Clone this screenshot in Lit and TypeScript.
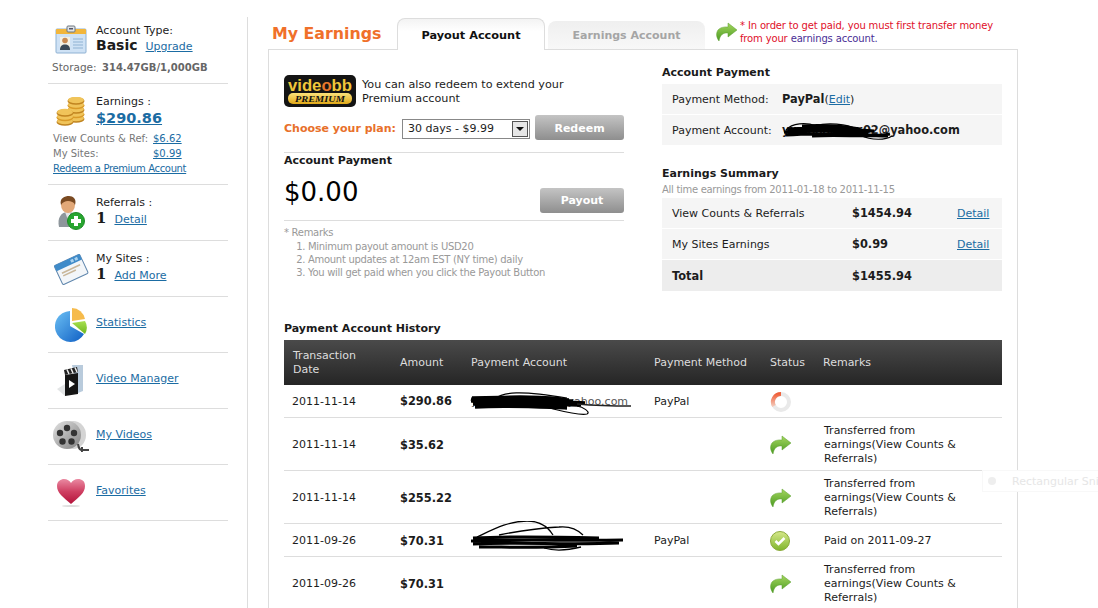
import { LitElement, css, html, svg } from 'lit'
import { customElement } from 'lit/decorators.js'

const arrowIcon = (w = 22, h = 20) => html`
  <svg width=${w} height=${h} viewBox="0 0 22 20">
    <defs>
      <linearGradient id="ag" x1="0" y1="0" x2="0" y2="1">
        <stop offset="0" stop-color="#a4d65e" /><stop offset="1" stop-color="#4a9a22" />
      </linearGradient>
    </defs>
    <path d="M12 1 L21 8 L12 15 L12 11 C7 10.500 4 13 3 19 C0 15 0 11 2 8 C4 5.500 8 4.600 12 5 Z" fill="url(#ag)" stroke="#5a9e2c" stroke-width=".5" />
  </svg>
`

const cardIcon = html`
  <svg width="32" height="30" viewBox="0 0 32 30">
    <rect x="1" y="4" width="30" height="24" rx="1" fill="#cfe2f5" stroke="#8fb2d3" />
    <path d="M1 5 a1 1 0 0 1 1-1 h28 a1 1 0 0 1 1 1 v4 H1Z" fill="#f2b63c" />
    <rect x="12" y="1" width="8" height="6" rx="1" fill="#dfe3e6" stroke="#6d7780" />
    <rect x="14" y="3" width="4" height="1.500" fill="#556" />
    <rect x="5" y="12" width="10" height="13" fill="#f6f1e4" />
    <circle cx="10" cy="15.500" r="2.800" fill="#c98a52" />
    <path d="M5 25 c0-4 2-5.500 5-5.500 s5 1.500 5 5.500Z" fill="#3c4a58" />
    <path d="M18 14h10M18 17h10M18 20h10M18 23h10" stroke="#8fb2d3" />
  </svg>
`

const coinStack = (x: number, base: number, n: number) => {
  const out = []
  for (let i = 0; i < n; i++) {
    const y = base - i * 4.500
    out.push(svg`<ellipse cx=${x} cy=${y} rx="8.500" ry="3.800" fill=${i % 2 ? '#d99a28' : '#c08420'} />
      <ellipse cx=${x} cy=${y - 1} rx="8" ry="3.200" fill="#f0c45a" />`)
  }
  return out
}

const coinsIcon = html`
  <svg width="32" height="30" viewBox="0 0 32 30">
    ${coinStack(21, 22, 5)}
    ${coinStack(10, 25, 3)}
  </svg>
`

const referralIcon = html`
  <svg width="30" height="34" viewBox="0 0 30 34">
    <path d="M3 31 c-2-9 2-15 9-15 s11 5 10 15Z" fill="#8e969c" />
    <path d="M9 16 l3 8 l3-8Z" fill="#e4e6e8" />
    <ellipse cx="12" cy="9" rx="7" ry="8" fill="#e2a878" />
    <path d="M5 9 C3 2 9 0 13 0 s8 3 6 9 C18 6 15 5 12 5 S7 6 5 9Z" fill="#7a4a22" />
    <circle cx="20" cy="25" r="8.500" fill="#27a52f" stroke="#1d8c26" />
    <path d="M18 20h4v3h3v4h-3v3h-4v-3h-3v-4h3Z" fill="#fff" />
  </svg>
`

const siteIcon = html`
  <svg width="36" height="34" viewBox="0 0 36 34">
    <g transform="rotate(-25 18 17)">
      <rect x="4" y="7" width="28" height="21" rx="1.500" fill="#f3f6f9" stroke="#5f86ad" />
      <rect x="4" y="7" width="28" height="6" fill="#3f8bc9" />
      <rect x="21" y="8.500" width="3" height="3" fill="#a9d2ef" />
      <rect x="25.500" y="8.500" width="3" height="3" fill="#a9d2ef" />
      <path d="M8 17h20M8 20h14" stroke="#c9b79a" stroke-width="1.500" />
    </g>
  </svg>
`

const pieIcon = html`
  <svg width="32" height="34" viewBox="0 0 32 34">
    <defs>
      <linearGradient id="pb" x1="0" y1="0" x2="1" y2="1">
        <stop offset="0" stop-color="#6cc0f4" /><stop offset="1" stop-color="#0f5fc4" />
      </linearGradient>
      <linearGradient id="pg" x1="0" y1="0" x2="0" y2="1">
        <stop offset="0" stop-color="#a8e050" /><stop offset="1" stop-color="#6fb71e" />
      </linearGradient>
    </defs>
    <path d="M15 3 A15.500 15.500 0 1 0 29 26 L15 18Z" fill="url(#pb)" />
    <path d="M17 15 L30 13 A13 13 0 0 1 30 26Z" fill="url(#pg)" />
    <path d="M17 0 A13.500 13.500 0 0 1 30 11 L17 13Z" fill="#f6bb4c" />
  </svg>
`

const clapIcon = html`
  <svg width="30" height="34" viewBox="0 0 30 34">
    <path d="M16 1 h11 v26 l-5 2Z" fill="#b9cbdc" />
    <path d="M1 25 l8-5 v12 Z" fill="#e3e5e6" />
    <path d="M9 11 l13-2 v21 l-13 2Z" fill="#151515" />
    <path d="M8 6 l13-3 l1 5 l-13 3Z" fill="#222" />
    <path d="M11 5.500 l2 4.500 M15 4.500 l2 4.500 M19 3.500 l2 4.500" stroke="#eee" stroke-width="1.500" />
    <path d="M13 16 l6 4 l-6 4Z" fill="#fff" />
  </svg>
`

const reelIcon = html`
  <svg width="38" height="34" viewBox="0 0 38 34">
    <defs>
      <linearGradient id="rg" x1="0" y1="0" x2="1" y2="1">
        <stop offset="0" stop-color="#e2e2e2" /><stop offset="1" stop-color="#808080" />
      </linearGradient>
    </defs>
    <ellipse cx="21" cy="15" rx="13" ry="14" fill="#d4d4d4" />
    <ellipse cx="15" cy="15" rx="14" ry="14" fill="url(#rg)" />
    <circle cx="15" cy="8" r="3.200" fill="#333" />
    <circle cx="8" cy="13" r="3.200" fill="#333" />
    <circle cx="22" cy="13" r="3.200" fill="#333" />
    <circle cx="10.500" cy="21.500" r="3.200" fill="#333" />
    <circle cx="19.500" cy="21.500" r="3.200" fill="#333" />
    <path d="M26 24 q1 7 5 6 l6 0 M30 27 l0 5" stroke="#444" stroke-width="2" fill="none" />
  </svg>
`

const heartIcon = html`
  <svg width="32" height="32" viewBox="0 0 32 32">
    <defs>
      <linearGradient id="hg" x1="0" y1="0" x2="0" y2="1">
        <stop offset="0" stop-color="#ea8aa2" /><stop offset=".5" stop-color="#cf3f62" /><stop offset="1" stop-color="#b3123a" />
      </linearGradient>
    </defs>
    <path d="M16 27 C8 20 2 16 2 9 C2 4 6 2 9 2 C12 2 15 4 16 6 C17 4 20 2 23 2 C27 2 30 4 30 9 C30 16 24 20 16 27Z" fill="url(#hg)" />
    <ellipse cx="16" cy="29" rx="9" ry="1" fill="#ddd" />
  </svg>
`

const spinnerIcon = html`
  <svg width="22" height="22" viewBox="0 0 22 22">
    <defs>
      <linearGradient id="sg" x1="0" y1="0" x2="0" y2="1">
        <stop offset="0" stop-color="#f0603a" /><stop offset="1" stop-color="#f3c8b8" />
      </linearGradient>
    </defs>
    <circle cx="11" cy="11" r="8" fill="none" stroke="#e9e9e9" stroke-width="4" />
    <path d="M11 3 A8 8 0 0 0 4 15" fill="none" stroke="url(#sg)" stroke-width="4" />
  </svg>
`

const checkIcon = html`
  <svg width="20" height="20" viewBox="0 0 20 20">
    <defs>
      <linearGradient id="cg" x1="0" y1="0" x2="0" y2="1">
        <stop offset="0" stop-color="#d6e88a" /><stop offset="1" stop-color="#7fb52c" />
      </linearGradient>
    </defs>
    <circle cx="10" cy="10" r="9.500" fill="url(#cg)" stroke="#8cab3c" />
    <path d="M5.500 10 l3 3 l6-6" fill="none" stroke="#fff" stroke-width="2.500" />
  </svg>
`

// pen scribbles the owner drew over the e-mail addresses
const scribbleOne = html`
  <svg class="scribble s1" width="164" height="26" viewBox="0 0 164 26">
    <path d="M3 8 C30 7 70 8 100 10 M2 11 C40 9 80 11 116 13 M4 14 C40 12 80 14 112 15 M6 17 C40 15 70 17 98 18 M26 8 C50 6 70 7 92 9 M2 9 C30 16 70 9 104 11" stroke="#000" stroke-width="3.400" fill="none" />
    <path d="M25 9 C35 2 50 0 98 8 M72 16 C90 20 108 26 118 24 C122 22 114 17 108 16" stroke="#000" stroke-width="1.200" fill="none" />
    <path d="M108 14 C120 15 140 16 162 16" stroke="#222" stroke-width="1.600" fill="none" />
  </svg>
`

const scribbleTwo = html`
  <svg class="scribble s2" width="156" height="32" viewBox="0 0 156 32">
    <path d="M4 17 C40 15 90 16 130 17 M2 20 C50 18 100 20 154 19 M4 23 C50 21 100 24 150 22 M10 26 C40 26 70 27 108 25" stroke="#000" stroke-width="3" fill="none" />
    <path d="M8 16 C25 8 40 0 58 0 C70 0 78 4 84 14 M30 14 C50 10 70 7 90 6 C100 5 108 8 114 14 M75 27 C85 30 100 29 112 26" stroke="#000" stroke-width="1.300" fill="none" />
  </svg>
`

const scribbleTop = html`
  <svg class="scribble" width="112" height="20" viewBox="0 0 112 20">
    <path d="M2 11 C30 9 60 9 86 12 M4 14 C40 11 70 14 106 15 M6 8 C40 6 70 9 92 10 M20 5 C40 4 60 5 78 8 M30 15 C60 13 90 17 108 13" stroke="#000" stroke-width="3.200" fill="none" />
    <path d="M4 9 C10 2 24 1 34 5 C44 1 66 3 74 8 M78 14 C90 20 104 19 110 15" stroke="#000" stroke-width="1.200" fill="none" />
  </svg>
`

const transferred = html`Transferred from<br />earnings(View Counts &amp;<br />Referrals)`

@customElement('app-root')
export class AppRoot extends LitElement {

  private history = [
    { date: '2011-11-14', amount: '$290.86', account: scribbleOne, mail: 'yxxxxxxxxxx02@yahoo.com', method: 'PayPal', status: spinnerIcon, remarks: null },
    { date: '2011-11-14', amount: '$35.62', status: arrowIcon(), remarks: transferred },
    { date: '2011-11-14', amount: '$255.22', status: arrowIcon(), remarks: transferred },
    { date: '2011-09-26', amount: '$70.31', account: scribbleTwo, method: 'PayPal', status: checkIcon, remarks: 'Paid on 2011-09-27' },
    { date: '2011-09-26', amount: '$70.31', status: arrowIcon(), remarks: transferred },
  ]

  private navLinks = [
    { icon: pieIcon, label: 'Statistics' },
    { icon: clapIcon, label: 'Video Manager' },
    { icon: reelIcon, label: 'My Videos' },
    { icon: heartIcon, label: 'Favorites' },
  ]

  private renderSidebar() {
    return html`
      <aside class="sidebar">
        <div class="side-row account">
          <div class="side-head">
            <div class="side-icon">${cardIcon}</div>
            <div>
              <div>Account Type:</div>
              <div class="count-line"><b class="basic">Basic</b><a href="#">Upgrade</a></div>
            </div>
          </div>
          <div class="storage">Storage: <b>314.47GB/1,000GB</b></div>
        </div>
        <div class="side-row earnings">
          <div class="side-head">
            <div class="side-icon">${coinsIcon}</div>
            <div>
              <div>Earnings :</div>
              <a class="big-money" href="#">$290.86</a>
            </div>
          </div>
          <div class="small-lines">
            <div class="split"><span>View Counts &amp; Ref:</span><a href="#">$6.62</a></div>
            <div class="split"><span>My Sites:</span><a href="#">$0.99</a></div>
            <a class="redeem-link" href="#">Redeem a Premium Account</a>
          </div>
        </div>
        <div class="side-row plain">
          <div class="side-icon">${referralIcon}</div>
          <div>
            <div>Referrals :</div>
            <div class="count-line tall"><b class="count">1</b><a href="#">Detail</a></div>
          </div>
        </div>
        <div class="side-row plain">
          <div class="side-icon">${siteIcon}</div>
          <div>
            <div>My Sites :</div>
            <div class="count-line tall"><b class="count">1</b><a href="#">Add More</a></div>
          </div>
        </div>
        ${this.navLinks.map(link => html`
          <div class="side-row plain">
            <div class="side-icon">${link.icon}</div>
            <a class="nav-link" href="#">${link.label}</a>
          </div>
        `)}
      </aside>
    `
  }

  private renderLeftColumn() {
    return html`
      <div class="left-col">
        <div class="promo">
          <svg class="logo" width="72" height="32" viewBox="0 0 72 32">
            <defs>
              <linearGradient id="lp" x1="0" y1="0" x2="0" y2="1">
                <stop offset="0" stop-color="#fbe27a" /><stop offset="1" stop-color="#e0a818" />
              </linearGradient>
            </defs>
            <rect width="72" height="32" rx="5" fill="#141414" />
            <text x="4" y="16" textLength="64" lengthAdjust="spacingAndGlyphs" font-family="Liberation Sans" font-weight="700" font-size="17" fill="#f0c63a">vide<tspan fill="#e8762a">o</tspan>bb</text>
            <rect x="4" y="18" width="64" height="11" rx="5" fill="url(#lp)" />
            <text x="11" y="27" textLength="50" lengthAdjust="spacingAndGlyphs" font-family="Liberation Serif" font-style="italic" font-weight="700" font-size="9" fill="#111">PREMIUM</text>
          </svg>
          <span class="promo-text">You can also redeem to extend your<br />Premium account</span>
        </div>
        <div class="plan">
          <span class="plan-label">Choose your plan:</span>
          <div class="select">30 days - $9.99<span class="select-btn"></span></div>
          <button class="btn redeem">Redeem</button>
        </div>
        <div class="payment">
          <div class="heading">Account Payment</div>
          <div class="payout-row">
            <div class="balance">$0.00</div>
            <button class="btn payout">Payout</button>
          </div>
        </div>
        <div class="remarks">
          <div>* Remarks</div>
          <ol>
            <li>Minimum payout amount is USD20</li>
            <li>Amount updates at 12am EST (NY time) daily</li>
            <li>You will get paid when you click the Payout Button</li>
          </ol>
        </div>
      </div>
    `
  }

  private renderRightColumn() {
    return html`
      <div class="right-col">
        <div class="heading">Account Payment</div>
        <div class="info-rows">
          <div class="info-row"><span class="info-label">Payment Method:</span><span><b>PayPal</b>(<a href="#">Edit</a>)</span></div>
          <div class="info-row">
            <span class="info-label">Payment Account:</span>
            <span class="covered"><b class="mail">yxxxxxxxxxx02@yahoo.com</b>${scribbleTop}</span>
          </div>
        </div>
        <div class="heading summary-head">Earnings Summary</div>
        <div class="sub">All time earnings from 2011-01-18 to 2011-11-15</div>
        <div class="info-rows summary-rows">
          <div class="sum-row"><span>View Counts &amp; Referrals</span><b>$1454.94</b><a href="#">Detail</a></div>
          <div class="sum-row"><span>My Sites Earnings</span><b>$0.99</b><a href="#">Detail</a></div>
          <div class="sum-row total"><b>Total</b><b>$1455.94</b><span></span></div>
        </div>
      </div>
    `
  }

  private renderHistory() {
    return html`
      <div class="heading history-head">Payment Account History</div>
      <table>
        <colgroup>
          <col class="c1" /><col class="c2" /><col class="c3" />
          <col class="c4" /><col class="c5" /><col class="c6" />
        </colgroup>
        <thead>
          <tr>
            <th>Transaction<br />Date</th><th>Amount</th><th>Payment Account</th>
            <th>Payment Method</th><th>Status</th><th>Remarks</th>
          </tr>
        </thead>
        <tbody>
          ${this.history.map(row => html`
            <tr>
              <td>${row.date}</td>
              <td><b>${row.amount}</b></td>
              <td class="account-cell">${row.mail ?? ''}${row.account ?? ''}</td>
              <td>${row.method ?? ''}</td>
              <td class="status-cell">${row.status}</td>
              <td class="remarks-cell">${row.remarks ?? ''}</td>
            </tr>
          `)}
        </tbody>
      </table>
    `
  }

  render() {
    return html`
      <div class="page">
        ${this.renderSidebar()}
        <main class="main">
          <div class="top">
            <h1>My Earnings</h1>
            <div class="tab active">Payout Account</div>
            <div class="tab">Earnings Account</div>
            <div class="notice">
              ${arrowIcon(22, 20)}
              <p>* In order to get paid, you must first transfer money<br />from your <span class="purple">earnings account.</span></p>
            </div>
          </div>
          <section class="panel">
            <div class="columns">
              ${this.renderLeftColumn()}
              ${this.renderRightColumn()}
            </div>
            ${this.renderHistory()}
          </section>
        </main>
      </div>
      <div class="snip"><span class="snip-dot"></span>Rectangular Snip</div>
    `
  }

  static styles = css`
    :host {
      display: block;
      position: relative;
      width: 1098px;
      height: 608px;
      overflow: hidden;
      background: #fff;
      color: #1c1c1c;
      font-family: "DejaVu Sans", sans-serif;
      font-size: 11px;
    }
    a { color: #1b6ca3; }
    b { font-weight: 700; }

    .page {
      display: flex;
      height: 608px;
      padding: 17px 0 0 48px;
      box-sizing: border-box;
    }

    /* sidebar */
    .sidebar { width: 180px; flex: none; margin-right: 19px; }
    .side-row { border-bottom: 1px solid #ddd; box-sizing: border-box; }
    .side-head, .plain { display: flex; align-items: center; }
    .side-icon { width: 48px; flex: none; display: flex; justify-content: center; padding-right: 3px; box-sizing: border-box; }
    .account { height: 67px; padding-top: 7px; }
    .earnings { height: 101px; padding-top: 11px; }
    .plain { height: 56px; }
    .nav-link { margin-top: -4px; }
    .count-line { display: flex; align-items: baseline; gap: 8px; line-height: 17px; }
    .count-line.tall { line-height: 19px; }
    .basic { font-size: 14px; }
    .count { font-size: 15px; font-family: "DejaVu Serif", serif; }
    .storage { margin: 6px 0 0 4px; color: #666; font-size: 10.500px; }
    .storage b { font-size: 10px; margin-left: 2px; }
    .big-money { display: block; font-size: 14.500px; font-weight: 700; line-height: 21px; }
    .small-lines { margin: 2px 0 0 5px; color: #777; font-size: 10px; line-height: 15px; }
    .split { display: flex; }
    .split span { width: 100px; }
    .redeem-link { letter-spacing: -0.35px; }

    /* main */
    .main { flex: 1; border-left: 1px solid #ddd; padding-left: 20px; min-width: 0; }
    .top { display: flex; align-items: flex-end; height: 33px; width: 750px; margin-bottom: -1px; position: relative; z-index: 1; }
    h1 { flex: none; box-sizing: border-box; margin: 0 15px 5px 4px; color: #f0702a; font-size: 15.800px; line-height: 22px; width: 110px; white-space: nowrap; }
    .tab {
      flex: none;
      width: 157px;
      height: 28px;
      line-height: 30px;
      margin-bottom: 1px;
      border-radius: 8px 8px 0 0;
      background: linear-gradient(#efefef, #f8f8f8);
      color: #a5a5a5;
      font-weight: 700;
      font-size: 11px;
      text-align: center;
      box-sizing: border-box;
    }
    .tab.active {
      width: 148px;
      height: 32px;
      line-height: 33px;
      margin: 0 3px 0 0;
      background: linear-gradient(#f3f3f3, #fff 40%);
      border: 1px solid #ddd;
      border-bottom: 0;
      color: #111;
      font-size: 11.300px;
    }
    .notice { flex: none; display: flex; align-items: flex-start; margin: 0 0 5px 11px; gap: 2px; color: #e0102a; font-size: 10px; letter-spacing: -0.15px; line-height: 13px; }
    .notice svg { margin-top: 3px; }
    .notice p { margin: 0; white-space: nowrap; }
    .purple { color: #4a2f96; }

    .panel { width: 750px; height: 560px; border: 1px solid #ddd; box-sizing: border-box; padding: 0 15px; }
    .columns { display: flex; height: 272px; }
    .heading { font-weight: 700; color: #1a1a1a; line-height: 14px; }

    .left-col { width: 340px; margin-right: 38px; flex: none; padding-top: 25px; }
    .promo { display: flex; align-items: center; gap: 6px; line-height: 14px; font-size: 11.200px; }
    .promo-text { padding-top: 2px; }
    .plan { display: flex; align-items: center; margin-top: 8px; height: 25px; }
    .plan-label { color: #e8702a; font-weight: 700; width: 118px; white-space: nowrap; margin-top: 2px; }
    .select { width: 128px; height: 20px; line-height: 18px; border: 1px solid #888; box-sizing: border-box; padding-left: 5px; position: relative; margin-top: 2px; }
    .select-btn { position: absolute; right: 1px; top: 1px; width: 16px; height: 16px; background: #e6e6e6; border: 1px solid #555; box-sizing: border-box; }
    .select-btn::after { content: ''; position: absolute; left: 3px; top: 5px; border: 4px solid transparent; border-top-color: #111; border-bottom: 0; }
    .btn {
      border: 0;
      border-radius: 3px;
      background: linear-gradient(#c4c4c4, #8e8e8e);
      color: #fff;
      font: 700 11px "DejaVu Sans", sans-serif;
      padding: 2px 0 0;
      width: 89px;
      height: 25px;
      flex: none;
    }
    .redeem { margin-left: 5px; }
    .payment { margin-top: 12px; height: 69px; padding-top: 1px; box-sizing: border-box; border-top: 1px solid #ddd; border-bottom: 1px solid #ddd; }
    .payout-row { display: flex; justify-content: space-between; }
    .balance { font-size: 26px; line-height: 38px; color: #000; margin-top: 5px; }
    .payout { width: 84px; margin-top: 20px; padding: 0; }
    .remarks { margin-top: 5px; color: #999; line-height: 13px; font-size: 10px; letter-spacing: -0.3px; }
    ol { margin: 1px 0 0; padding: 0 0 0 24px; }

    .right-col { width: 340px; flex: none; padding-top: 16px; }
    .right-col b { font-size: 11.400px; }
    .info-rows { display: flex; flex-direction: column; gap: 1px; margin-top: 4px; }
    .info-row { display: flex; align-items: center; height: 30px; background: #f5f5f5; padding-left: 10px; }
    .info-label { width: 110px; }
    .covered { position: relative; }
    .mail { white-space: nowrap; }
    .covered .scribble { position: absolute; left: 0; top: -2px; }
    .summary-head { margin-top: 22px; }
    .sub { color: #999; font-size: 10px; letter-spacing: -0.3px; line-height: 13px; margin-top: 2px; }
    .summary-rows { margin-top: 2px; }
    .sum-row { display: grid; grid-template-columns: 180px 105px 45px; align-items: center; height: 30px; background: #f5f5f5; padding-left: 10px; }
    .sum-row.total { background: #ededed; height: 31px; }

    table { width: 718px; table-layout: fixed; border-collapse: collapse; margin-top: 4px; }
    .c1 { width: 108px; }
    .c2 { width: 71px; }
    .c3 { width: 183px; }
    .c4 { width: 116px; }
    .c5 { width: 53px; }
    .c6 { width: 187px; }
    th {
      height: 45px;
      padding: 0 0 0 8px;
      background: linear-gradient(#4a4a4a, #252525);
      color: #ddd;
      font-weight: 400;
      text-align: left;
      line-height: 14px;
    }
    th:first-child { padding-left: 9px; }
    td { padding: 3px 0 0 8px; border-bottom: 1px solid #ddd; line-height: 14px; height: 33px; box-sizing: border-box; white-space: nowrap; }
    td b { font-size: 11.400px; }
    tbody tr:nth-child(1) td { height: 32px; padding-top: 2px; }
    tbody tr:nth-child(2) td, tbody tr:nth-child(3) td, tbody tr:nth-child(5) td { height: 53px; }
    .remarks-cell { padding-left: 9px; }
    .account-cell { position: relative; color: #555; }
    .account-cell .scribble { position: absolute; left: 6px; }
    .account-cell .s1 { top: 5px; }
    .account-cell .s2 { top: -3px; }
    .status-cell svg { display: block; }

    .snip {
      position: absolute;
      left: 982px;
      top: 470px;
      width: 116px;
      height: 22px;
      line-height: 22px;
      border: 1px solid #f8f8f8;
      border-right: 0;
      background: #fff;
      box-sizing: border-box;
      color: #e6e6e6;
      white-space: nowrap;
      overflow: hidden;
      padding-left: 29px;
    }
    .snip-dot { position: absolute; left: 5px; top: 6px; width: 8px; height: 8px; border-radius: 50%; background: #eee; }
  `
}

declare global {
  interface HTMLElementTagNameMap {
    'app-root': AppRoot
  }
}
